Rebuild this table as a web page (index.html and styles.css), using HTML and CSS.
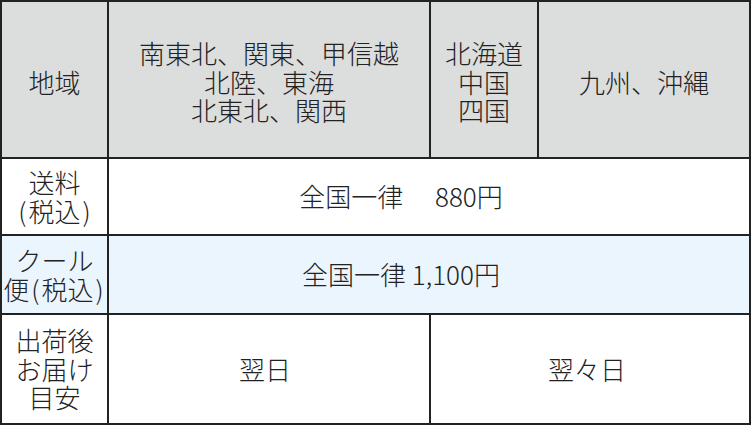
FILE: index.html
```html
<!DOCTYPE html>
<html lang="ja">
<head>
<meta charset="utf-8">
<title>送料</title>
<link rel="stylesheet" href="styles.css">
</head>
<body>
<div class="table">
  <div class="cell head"><p class="txt">地域</p></div>
  <div class="cell head"><p class="txt">南東北、関東、甲信越<br>北陸、東海<br>北東北、関西</p></div>
  <div class="cell head"><p class="txt">北海道<br>中国<br>四国</p></div>
  <div class="cell head"><p class="txt">九州、沖縄</p></div>

  <div class="cell label"><p class="txt">送料<br><span class="paren">(</span>税込<span class="paren">)</span></p></div>
  <div class="cell value span3 shift"><p class="txt">全国一律　 880円</p></div>

  <div class="cell label cool"><p class="txt">クール<br>便<span class="paren">(</span>税込<span class="paren">)</span></p></div>
  <div class="cell value span3 cool shift"><p class="txt">全国一律 1,100円</p></div>

  <div class="cell label"><p class="txt">出荷後<br>お届け<br>目安</p></div>
  <div class="cell value next"><p class="txt">翌日</p></div>
  <div class="cell value span2 nextnext"><p class="txt">翌々日</p></div>
</div>
</body>
</html>
```

FILE: styles.css
```css
html, body {
  margin: 0;
  padding: 0;
  background: #ffffff;
}

body {
  font-family: "Noto Sans CJK JP", "Noto Sans", sans-serif;
  font-size: 26px;
  font-weight: 300;
  line-height: 1.1;
  color: #222222;
}

.table {
  display: grid;
  width: 751px;
  grid-template-columns: 105px 320px 106px 210px;
  grid-template-rows: 155px 75px 77px 108px;
  gap: 2px;
  padding: 2px;
  box-sizing: border-box;
  height: 425px;
  background: #222222;
}

.cell {
  display: flex;
  align-items: center;
  justify-content: center;
  text-align: center;
  background: #ffffff;
}

.txt {
  margin: 0;
  white-space: nowrap;
}

.head {
  background: #dcdddd;
  padding-top: 5px;
}

.cool {
  background: #ebf5fd;
}

.paren {
  padding: 0 2px;
}

.span3 {
  grid-column: 2 / 5;
}

.span2 {
  grid-column: 3 / 5;
}

.shift {
  padding-right: 56px;
}

.next {
  padding-right: 8px;
}

.nextnext {
  padding-right: 6px;
}
```
